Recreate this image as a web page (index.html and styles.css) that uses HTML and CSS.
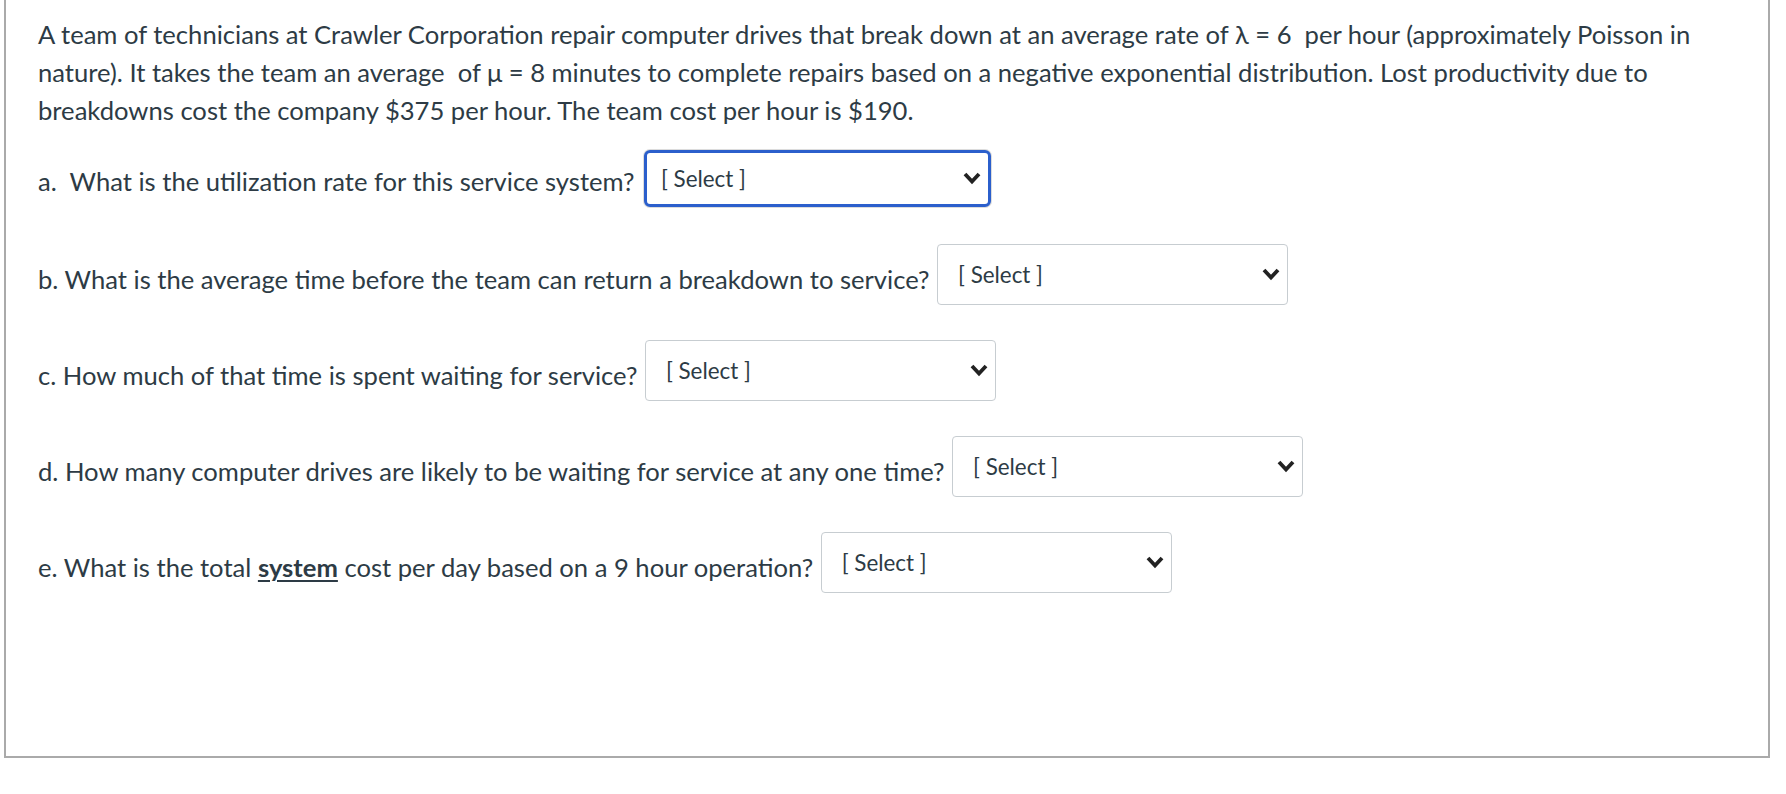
FILE: index.html
```html
<!DOCTYPE html>
<html>
<head>
<meta charset="utf-8">
<link rel="stylesheet" href="styles.css">
</head>
<body>
<div class="frame">
  <p class="intro">A team of technicians at Crawler Corporation repair computer drives that break down at an average rate of λ = 6&nbsp; per hour (approximately Poisson in nature). It takes the team an average&nbsp; of μ = 8 minutes to complete repairs based on a negative exponential distribution. Lost productivity due to breakdowns cost the company $375 per hour. The team cost per hour is $190.</p>

  <p class="q first">a.&nbsp; What is the utilization rate for this service system? <span class="select focus"><span class="sel-text">[ Select ]</span><svg class="chev" viewBox="0 0 20 14" width="20" height="14"><polyline points="3,3 10,10.5 17,3" fill="none" stroke="#222" stroke-width="3.8"/></svg></span></p>

  <p class="q">b. What is the average time before the team can return a breakdown to service? <span class="select"><span class="sel-text">[ Select ]</span><svg class="chev" viewBox="0 0 20 14" width="20" height="14"><polyline points="3,3 10,10.5 17,3" fill="none" stroke="#222" stroke-width="3.8"/></svg></span></p>

  <p class="q">c. How much of that time is spent waiting for service? <span class="select"><span class="sel-text">[ Select ]</span><svg class="chev" viewBox="0 0 20 14" width="20" height="14"><polyline points="3,3 10,10.5 17,3" fill="none" stroke="#222" stroke-width="3.8"/></svg></span></p>

  <p class="q">d. How many computer drives are likely to be waiting for service at any one time? <span class="select"><span class="sel-text">[ Select ]</span><svg class="chev" viewBox="0 0 20 14" width="20" height="14"><polyline points="3,3 10,10.5 17,3" fill="none" stroke="#222" stroke-width="3.8"/></svg></span></p>

  <p class="q">e. What is the total <strong class="ul">system</strong> cost per day based on a 9 hour operation? <span class="select"><span class="sel-text">[ Select ]</span><svg class="chev" viewBox="0 0 20 14" width="20" height="14"><polyline points="3,3 10,10.5 17,3" fill="none" stroke="#222" stroke-width="3.8"/></svg></span></p>
</div>
</body>
</html>
```
FILE: styles.css
```css
html, body {
  margin: 0;
  padding: 0;
  background: #fff;
}
body {
  font-family: Lato, "Open Sans", sans-serif;
  color: #2d3b45;
  font-size: 25.6px;
}
.frame {
  margin-left: 4px;
  width: 1766px;
  height: 758px;
  border: 2px solid #aaaaaa;
  border-top: none;
  padding: 0 0 0 32px;
  box-sizing: border-box;
}
.intro {
  margin: 0;
  padding-top: 15px;
  line-height: 38.2px;
}
.q {
  margin: 0;
  line-height: 38.4px;
}
.intro + .q { margin-top: 20px; }
.q + .q { margin-top: 35px; }
.q.first { padding-bottom: 2px; }
.ul {
  font-weight: 700;
  text-decoration: underline;
  text-decoration-thickness: 2px;
  text-underline-offset: 3px;
}
.select {
  display: inline-flex;
  align-items: flex-start;
  justify-content: space-between;
  box-sizing: border-box;
  width: 351px;
  height: 61px;
  border: 1px solid #c7cdd1;
  border-radius: 4px;
  padding: 15px 6px 0 20px;
  margin-left: 1px;
  vertical-align: 6px;
  font-size: 22.4px;
  color: #2d3b45;
  background: #fff;
}
.sel-text {
  line-height: 30px;
}
.chev {
  align-self: center;
  margin-top: -15px;
}
.select.focus {
  border: 3px solid #2b5fcc;
  border-radius: 6px;
  box-shadow: 0 0 0 1px #dcdcdc;
  padding: 11px 6px 0 14px;
  width: 347px;
  height: 57px;
  margin-left: 3px;
  vertical-align: 4px;
}
.select.focus .chev {
  margin-top: -11px;
}
```
